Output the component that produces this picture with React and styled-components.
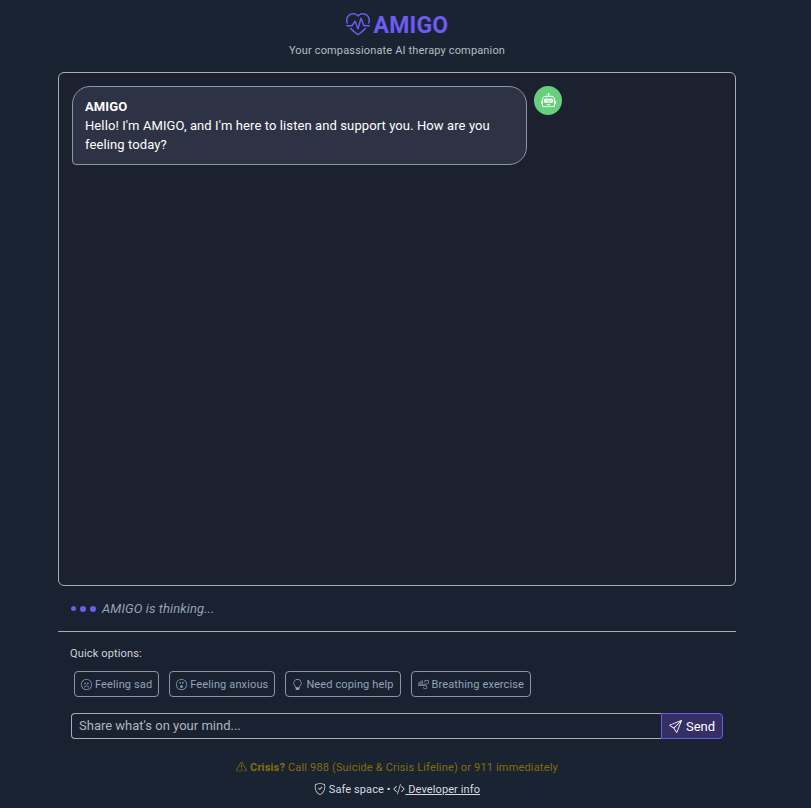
import React from 'react';
import styled, { createGlobalStyle } from 'styled-components';
import {
  BsHeartPulse,
  BsRobot,
  BsEmojiFrown,
  BsEmojiSurprise,
  BsLightbulb,
  BsWind,
  BsSend,
  BsExclamationTriangle,
  BsShieldCheck,
  BsCodeSlash,
} from 'react-icons/bs';

const GlobalStyle = createGlobalStyle`
  html, body {
    margin: 0;
    padding: 0;
    background: #1a2332;
    overflow: hidden;
  }
  body {
    font-family: Roboto, "Noto Sans", "Liberation Sans", sans-serif;
    color: #fff;
  }
`;

const Page = styled.div`
  width: 678px;
  height: 808px;
  margin-left: 58px;
  display: flex;
  flex-direction: column;
`;

const Header = styled.header`
  height: 72px;
  flex: none;
  display: flex;
  flex-direction: column;
  align-items: center;
  padding-top: 12px;
  box-sizing: border-box;
`;

const Title = styled.h1`
  margin: 0;
  display: flex;
  align-items: center;
  gap: 4px;
  font-size: 23px;
  line-height: 28px;
  font-weight: 700;
  letter-spacing: 0.2px;
  color: #6c5cf0;

  svg {
    margin-top: -2px;
  }
`;

const Subtitle = styled.p`
  margin: 3px 0 0;
  font-size: 11px;
  line-height: 16px;
  letter-spacing: 0.15px;
  color: #b2bec3;
`;

const ChatBox = styled.main`
  height: 514px;
  flex: none;
  box-sizing: border-box;
  border: 1px solid #a6adb8;
  border-radius: 6px;
  background: #1c2130;
  padding: 13px;
  display: flex;
  align-items: flex-start;
  gap: 7px;
`;

const Bubble = styled.div`
  width: 455px;
  height: 79px;
  box-sizing: border-box;
  padding: 10px 12px;
  border: 1px solid #8d95a5;
  border-radius: 18px 18px 18px 4px;
  background: #2d3345;
  font-size: 13px;
  line-height: 19px;
  letter-spacing: 0.1px;
`;

const BubbleName = styled.strong`
  display: block;
  font-weight: 700;
`;

const Avatar = styled.div`
  width: 28px;
  height: 29px;
  border-radius: 50%;
  background: #66d17c;
  display: flex;
  align-items: center;
  justify-content: center;
  font-size: 15px;
  color: #fff;
`;

const Thinking = styled.div`
  height: 46px;
  flex: none;
  box-sizing: border-box;
  padding: 0 13px;
  display: flex;
  align-items: center;
  border-bottom: 1px solid #a6adb8;
  background: #1a2130;
  font-size: 13px;
  font-style: italic;
  letter-spacing: 0.1px;
  color: #94a3b8;
`;

const Dots = styled.div`
  display: flex;
  align-items: center;
  gap: 4px;
  margin-right: 6px;
`;

const Dot = styled.span`
  width: ${(p) => p.$size}px;
  height: ${(p) => p.$size}px;
  border-radius: 50%;
  background: #6c5cf0;
`;

const Composer = styled.section`
  height: 119px;
  flex: none;
  box-sizing: border-box;
  padding: 14px 13px 0 13px;
  background: #1a2130;
`;

const QuickLabel = styled.div`
  margin-left: -1px;
  font-size: 11px;
  line-height: 16px;
  letter-spacing: 0.15px;
  color: #cfd4da;
`;

const QuickRow = styled.div`
  display: flex;
  gap: 10px;
  margin: 9px 0 0 3px;
`;

const QuickButton = styled.button`
  height: 26px;
  box-sizing: border-box;
  padding: 0 6px;
  display: flex;
  align-items: center;
  gap: 3px;
  background: transparent;
  border: 1px solid #8d95a5;
  border-radius: 4px;
  font: inherit;
  font-size: 11px;
  letter-spacing: 0.13px;
  color: #94a3b8;
`;

const InputRow = styled.div`
  display: flex;
  margin-top: 16px;
  height: 26px;
`;

const Input = styled.input`
  flex: 1;
  min-width: 0;
  box-sizing: border-box;
  padding: 0 7px 2px;
  background: transparent;
  border: 1px solid #a6adb8;
  border-right: none;
  border-radius: 4px 0 0 4px;
  font: inherit;
  font-size: 13px;
  color: #fff;
  outline: none;

  &::placeholder {
    color: #b0b5bf;
    opacity: 1;
  }
`;

const SendButton = styled.button`
  width: 62px;
  box-sizing: border-box;
  display: flex;
  align-items: center;
  justify-content: center;
  gap: 4px;
  background: #352f66;
  border: 1px solid #6c5cf0;
  border-radius: 0 4px 4px 0;
  font: inherit;
  font-size: 13px;
  color: #fff;
`;

const Footer = styled.footer`
  flex: 1;
  display: flex;
  flex-direction: column;
  align-items: center;
  padding-top: 9px;
  font-size: 11px;
  line-height: 16px;
`;

const Crisis = styled.div`
  letter-spacing: 0.17px;
  color: #856d0a;

  svg {
    vertical-align: -1px;
  }
`;

const Safe = styled.div`
  margin-top: 6px;
  letter-spacing: 0.1px;
  color: #d5dae0;

  svg {
    vertical-align: -2px;
  }
`;

const DevLink = styled.a`
  color: #d5dae0;
  text-decoration: underline;
`;

const quickOptions = [
  { label: 'Feeling sad', Icon: BsEmojiFrown },
  { label: 'Feeling anxious', Icon: BsEmojiSurprise },
  { label: 'Need coping help', Icon: BsLightbulb },
  { label: 'Breathing exercise', Icon: BsWind },
];

const App = () => (
  <>
    <GlobalStyle />
    <Page>
      <Header>
        <Title>
          <BsHeartPulse size={24} />
          AMIGO
        </Title>
        <Subtitle>Your compassionate AI therapy companion</Subtitle>
      </Header>

      <ChatBox>
        <Bubble>
          <BubbleName>AMIGO</BubbleName>
          Hello! I'm AMIGO, and I'm here to listen and support you. How are you feeling today?
        </Bubble>
        <Avatar>
          <BsRobot />
        </Avatar>
      </ChatBox>

      <Thinking>
        <Dots>
          <Dot $size={5} />
          <Dot $size={6} />
          <Dot $size={6} />
        </Dots>
        AMIGO is thinking...
      </Thinking>

      <Composer>
        <QuickLabel>Quick options:</QuickLabel>
        <QuickRow>
          {quickOptions.map(({ label, Icon }) => (
            <QuickButton key={label}>
              <Icon size={11} />
              {label}
            </QuickButton>
          ))}
        </QuickRow>
        <InputRow>
          <Input placeholder="Share what's on your mind..." />
          <SendButton>
            <BsSend size={13} />
            Send
          </SendButton>
        </InputRow>
      </Composer>

      <Footer>
        <Crisis>
          <BsExclamationTriangle size={11} /> <strong>Crisis?</strong> Call 988 (Suicide &amp; Crisis Lifeline) or 911 immediately
        </Crisis>
        <Safe>
          <BsShieldCheck size={12} /> Safe space • <BsCodeSlash size={12} />
          <DevLink href="#"> Developer info</DevLink>
        </Safe>
      </Footer>
    </Page>
  </>
);

export default App;
